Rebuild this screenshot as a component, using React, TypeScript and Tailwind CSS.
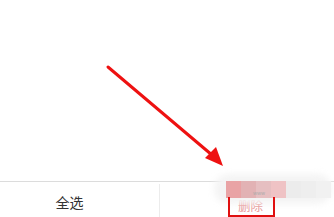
import React from 'react';

const mosaic = [
  { x: 226, y: 181, c: '#e9a3a5' },
  { x: 241, y: 181, c: '#e2b2b4' },
  { x: 256, y: 181, c: '#e6bfc1' },
  { x: 271, y: 181, c: '#efc3c5' },
  { x: 286, y: 181, c: '#ececec' },
  { x: 301, y: 181, c: '#eeeeee' },
  { x: 316, y: 181, c: '#f1f1f1' },
];

export default function App() {
  return (
    <div
      className="relative w-[334px] h-[217px] bg-white overflow-hidden flex flex-col"
      style={{ fontFamily: '"Noto Sans CJK SC", "Noto Sans", sans-serif' }}
    >
      <div className="flex-1" />

      {/* bottom action bar */}
      <div className="h-[36px] border-t border-[#dcdcdc] flex">
        <div className="w-[159px] flex items-center justify-center pr-[20px] pt-[6px] text-[14px] text-[#333]">
          全选
        </div>
        <div className="w-px mt-[2px] bg-[#ececec]" />
        <div className="flex-1 flex items-center justify-start pl-[78px] pt-[13px]">
          <span className="text-[12.5px] leading-none text-[#e79090]">删除</span>
        </div>
      </div>

      {/* blurred patch */}
      <div className="absolute left-[214px] top-[174px] w-[118px] h-[30px] rounded-full bg-[#f4f4f4] blur-[3px]" />
      {mosaic.map((m) => (
        <div
          key={m.x}
          className="absolute w-[15px] h-[17px]"
          style={{ left: m.x, top: m.y, background: m.c }}
        />
      ))}
      <div className="absolute left-[253px] top-[190px] text-[5px] leading-none text-[#aaa]">www</div>

      {/* red highlight box */}
      <div className="absolute left-[228px] top-[197px] w-[47px] h-[20px] border-2 border-t-0 border-[#e01010]" />

      {/* arrow */}
      <svg className="absolute left-0 top-0" width="334" height="217" viewBox="0 0 334 217">
        <line x1="108" y1="67" x2="212" y2="155" stroke="#ee1111" strokeWidth="3" strokeLinecap="round" />
        <polygon points="223,166 205,158 216,147" fill="#ee1111" />
      </svg>
    </div>
  );
}
